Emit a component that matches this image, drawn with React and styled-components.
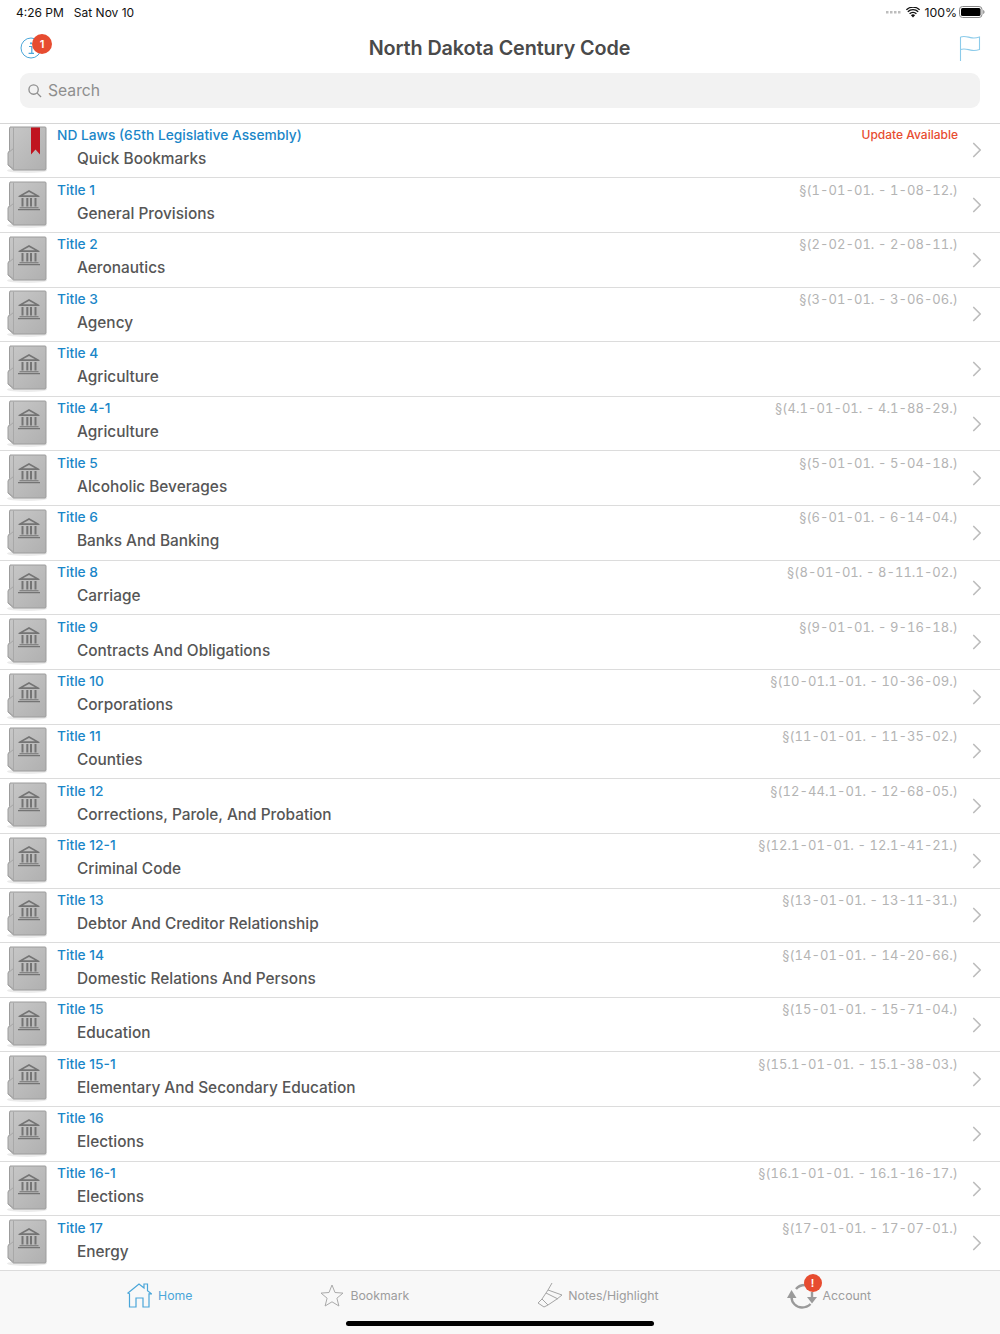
import React from 'react';
import styled, { createGlobalStyle } from 'styled-components';
import { ChevronRight } from 'lucide-react';

const GlobalStyle = createGlobalStyle`
    html, body {
        margin: 0;
        padding: 0;
        background: #fff;
    }
    body {
        font-family: Inter, "Liberation Sans", sans-serif;
    }
`

const Page = styled.div`
    width: 1000px;
    height: 1334px;
    display: flex;
    flex-direction: column;
    overflow: hidden;
    background: #fff;
`

const StatusBar = styled.div`
    height: 24px;
    padding: 0 15px 0 16px;
    display: flex;
    align-items: center;
    justify-content: space-between;
    font-size: 12px;
    color: #111;
`

const StatusGroup = styled.div`
    display: flex;
    align-items: center;
    gap: ${props => props.gap || 10}px;
`

const Percent = styled.span`
    font-size: 12.3px;
    margin-right: -2px;
`

const NavBar = styled.div`
    height: 49px;
    padding: 0 19px 1px 20px;
    box-sizing: border-box;
    display: flex;
    align-items: center;
    justify-content: space-between;
`

const NavIcon = styled.div`
    position: relative;
    width: 22px;
    height: 22px;
    display: flex;
`

const Badge = styled.span`
    position: absolute;
    top: ${props => props.top}px;
    left: ${props => props.left}px;
    width: ${props => props.size}px;
    height: ${props => props.size}px;
    border-radius: 50%;
    background: #e74c30;
    color: #fff;
    font-size: 11px;
    font-weight: 600;
    display: flex;
    align-items: center;
    justify-content: center;
`

const Heading = styled.h1`
    margin: 0 2px 0 0;
    font-size: 19.8px;
    font-weight: 600;
    letter-spacing: -0.1px;
    color: #4a4a4a;
`

const SearchWrap = styled.div`
    padding: 0 20px 14.6px;
`

const SearchBar = styled.div`
    height: 35px;
    border-radius: 9px;
    background: #f2f2f2;
    padding: 0 8px;
    display: flex;
    align-items: center;
    gap: 6px;
    font-size: 15.7px;
    color: #8e8e8e;
`

const List = styled.div`
    flex: 1;
    min-height: 0;
    border-top: 1px solid #d6d6d6;
`

const Row = styled.div`
    height: 54.65px;
    box-sizing: border-box;
    border-bottom: 1px solid #dcdcdc;
    display: flex;
    align-items: center;
    padding-left: 7px;
    padding-right: 10px;
`

const Book = styled.svg`
    flex: none;
    width: 42px;
    height: 48px;
    margin-right: 8px;
`

const RowBody = styled.div`
    flex: 1;
    min-width: 0;
    display: flex;
    flex-direction: column;
    gap: 4px;
    height: 46px;
    margin-bottom: 5px;
`

const TopLine = styled.div`
    display: flex;
    justify-content: space-between;
    align-items: center;
    height: 20px;
    padding-right: 6px;
`

const TitleText = styled.span`
    font-size: 13.75px;
    font-weight: 500;
    color: #1a86c8;
`

const Range = styled.span`
    font-size: 13px;
    letter-spacing: 0.05px;
    font-variant-numeric: tabular-nums;
    color: #b4b4b4;
`

const Update = styled.span`
    font-size: 12px;
    font-weight: 500;
    color: #e74c30;
`

const Name = styled.div`
    padding-left: 20px;
    font-size: 15.4px;
    font-weight: 500;
    color: #565656;
`

const Chevron = styled(ChevronRight)`
    flex: none;
    width: 26px;
    height: 26px;
    color: #bdbdbd;
`

const TabBar = styled.div`
    position: relative;
    flex: none;
    height: 62.75px;
    background: #f8f8f8;
`

const Tabs = styled.div`
    height: 47.6px;
    padding-left: 127px;
    display: flex;
    gap: 128px;
`

const Tab = styled.div`
    display: flex;
    align-items: center;
    gap: 6px;
    font-size: 12.3px;
    color: ${props => props.active ? '#4aa6d9' : '#9d9d9d'};
`

const TabIcon = styled.div`
    position: relative;
    display: flex;
`

const HomeBar = styled.div`
    position: absolute;
    left: 346px;
    bottom: 8px;
    width: 308px;
    height: 5px;
    border-radius: 3px;
    background: #000;
`

const rows = [
    ['Title 1', 'General Provisions', '§(1-01-01. - 1-08-12.)'],
    ['Title 2', 'Aeronautics', '§(2-02-01. - 2-08-11.)'],
    ['Title 3', 'Agency', '§(3-01-01. - 3-06-06.)'],
    ['Title 4', 'Agriculture', ''],
    ['Title 4-1', 'Agriculture', '§(4.1-01-01. - 4.1-88-29.)'],
    ['Title 5', 'Alcoholic Beverages', '§(5-01-01. - 5-04-18.)'],
    ['Title 6', 'Banks And Banking', '§(6-01-01. - 6-14-04.)'],
    ['Title 8', 'Carriage', '§(8-01-01. - 8-11.1-02.)'],
    ['Title 9', 'Contracts And Obligations', '§(9-01-01. - 9-16-18.)'],
    ['Title 10', 'Corporations', '§(10-01.1-01. - 10-36-09.)'],
    ['Title 11', 'Counties', '§(11-01-01. - 11-35-02.)'],
    ['Title 12', 'Corrections, Parole, And Probation', '§(12-44.1-01. - 12-68-05.)'],
    ['Title 12-1', 'Criminal Code', '§(12.1-01-01. - 12.1-41-21.)'],
    ['Title 13', 'Debtor And Creditor Relationship', '§(13-01-01. - 13-11-31.)'],
    ['Title 14', 'Domestic Relations And Persons', '§(14-01-01. - 14-20-66.)'],
    ['Title 15', 'Education', '§(15-01-01. - 15-71-04.)'],
    ['Title 15-1', 'Elementary And Secondary Education', '§(15.1-01-01. - 15.1-38-03.)'],
    ['Title 16', 'Elections', ''],
    ['Title 16-1', 'Elections', '§(16.1-01-01. - 16.1-16-17.)'],
    ['Title 17', 'Energy', '§(17-01-01. - 17-07-01.)'],
]

const BookIcon = ({bookmark, id}) => (
    <Book viewBox="0 0 42 48">
        <defs>
            <linearGradient id={id} x1="0" y1="0" x2="1" y2="1">
                <stop offset="0" stopColor="#c8c8c8" />
                <stop offset="1" stopColor="#b0b0b0" />
            </linearGradient>
        </defs>
        <ellipse cx="20" cy="44.5" rx="20" ry="2.5" fill="#000" opacity="0.08" />
        <path d="M3 1h35a1 1 0 0 1 1 1V43a1 1 0 0 1-1 1H6.500L1 39V27L2.500 24.500V3z" fill={`url(#${id})`} stroke="#9c9c9c" strokeWidth="1" />
        <path d="M6.500 1.500V44" stroke="#a8a8a8" strokeWidth="1" fill="none" />
        <path d="M1.500 26.500l5-4M1.500 39l5 4" stroke="#a6a6a6" strokeWidth="1" fill="none" />
        {bookmark
            ? <path d="M24 1.500h9v27l-4.500-5-4.500 5z" fill="#c0141f" />
            : <g fill="#747474">
                <path d="M22 9l-10.500 6v1h21v-1zM22 11l-6 3.300h12z" fillRule="evenodd" />
                <path d="M14.500 17h2v8.500h-2zM19.300 17h2v8.500h-2zM23 17h2v8.500h-2zM27.500 17h2v8.500h-2z" />
                <path d="M12.500 26.200h19v1h-19zM11 28h22v1.200H11z" />
            </g>}
    </Book>
)

const App = () => (
    <Page>
        <GlobalStyle />
        <StatusBar>
            <StatusGroup gap={10}>
                <span>4:26 PM</span>
                <span>Sat Nov 10</span>
            </StatusGroup>
            <StatusGroup gap={4}>
                <svg width="16" height="4" viewBox="0 0 16 4" fill="#bdbdbd">
                    <rect x="0" y="1" width="2.5" height="2.5" />
                    <rect x="4" y="1" width="2.5" height="2.5" />
                    <rect x="8" y="1" width="2.5" height="2.5" />
                    <rect x="12" y="1" width="2.5" height="2.5" />
                </svg>
                <svg width="14" height="11" viewBox="0 0 14 11">
                    <path d="M7 10.500L4.900 8.200a3 3 0 0 1 4.200 0z" fill="#111" />
                    <path d="M3.600 6.800a4.900 4.900 0 0 1 6.800 0M1.800 4.700a7.500 7.500 0 0 1 10.400 0M.4 2.800a9.600 9.600 0 0 1 13.200 0" stroke="#111" strokeWidth="1.400" fill="none" />
                </svg>
                <Percent>100%</Percent>
                <svg width="26" height="12" viewBox="0 0 26 12">
                    <rect x="0.5" y="0.5" width="22.5" height="11" rx="3" fill="none" stroke="#888" />
                    <rect x="2" y="2" width="19.5" height="8" rx="1.5" fill="#000" />
                    <path d="M24.200 4v4c.8-.2 1.300-1 1.300-2s-.5-1.800-1.300-2z" fill="#888" />
                </svg>
            </StatusGroup>
        </StatusBar>

        <NavBar>
            <NavIcon>
                <svg width="22" height="22" viewBox="0 0 22 22" fill="none">
                    <circle cx="11" cy="11" r="10" stroke="#4aa6d9" strokeWidth="1" />
                    <path d="M9 9.500h2.800V16M8.600 16.300h5.400" stroke="#4aa6d9" strokeWidth="1.200" />
                    <circle cx="11" cy="6.300" r="1.100" fill="#4aa6d9" />
                </svg>
                <Badge top={-3} left={12} size={20}>1</Badge>
            </NavIcon>
            <Heading>North Dakota Century Code</Heading>
            <svg width="22" height="26" viewBox="0 0 22 26" fill="none" stroke="#8ccbea" strokeWidth="1.100">
                <path d="M1.500 26V2" />
                <path d="M1.500 2c4-1.500 7 0 10 .6 3 .6 6 .4 9-.6v12.500c-3 1-6 1.200-9 .6-3-.6-6-2-10-.6" />
            </svg>
        </NavBar>

        <SearchWrap>
            <SearchBar>
                <svg width="14" height="14" viewBox="0 0 15 15" fill="none" stroke="#8e8e8e" strokeWidth="1.400">
                    <circle cx="6" cy="6" r="5" />
                    <path d="M9.800 9.800L14 14" />
                </svg>
                <span>Search</span>
            </SearchBar>
        </SearchWrap>

        <List>
            <Row>
                <BookIcon bookmark id="book-top" />
                <RowBody>
                    <TopLine>
                        <TitleText>ND Laws (65th Legislative Assembly)</TitleText>
                        <Update>Update Available</Update>
                    </TopLine>
                    <Name>Quick Bookmarks</Name>
                </RowBody>
                <Chevron strokeWidth={1.6} />
            </Row>
            {rows.map((row, i) => (
                <Row key={i}>
                    <BookIcon id={`book-${i}`} />
                    <RowBody>
                        <TopLine>
                            <TitleText>{row[0]}</TitleText>
                            <Range>{row[2]}</Range>
                        </TopLine>
                        <Name>{row[1]}</Name>
                    </RowBody>
                    <Chevron strokeWidth={1.6} />
                </Row>
            ))}
        </List>

        <TabBar>
            <Tabs>
                <Tab active>
                    <TabIcon>
                        <svg width="25" height="26" viewBox="0 0 25 26" fill="none" stroke="#4aa6d9" strokeWidth="1.200">
                            <path d="M1 11L12 2l5 4V2h3.500v6.800l4 3h-2.500V25H16V16H9v9H2.500V11.800z" />
                        </svg>
                    </TabIcon>
                    <span>Home</span>
                </Tab>
                <Tab>
                    <TabIcon>
                        <svg width="24" height="23" viewBox="0 0 24 23" fill="none" stroke="#aaa" strokeWidth="1">
                            <path d="M12 1l3 7.500 8 .6-6.100 5.100 2 7.800L12 17.800 5.100 22l2-7.800L1 9.100l8-.6z" />
                        </svg>
                    </TabIcon>
                    <span>Bookmark</span>
                </Tab>
                <Tab>
                    <TabIcon>
                        <svg width="25" height="26" viewBox="0 0 25 26" fill="none" stroke="#a5a5a5" strokeWidth="1">
                            <path d="M15 1l-4 7 14 5-5 4-9 6-6-6 6-9" />
                            <path d="M5 17l-4 4 6 4 4-2M9 11l12 6" />
                        </svg>
                    </TabIcon>
                    <span>Notes/Highlight</span>
                </Tab>
                <Tab>
                    <TabIcon>
                        <svg width="30" height="27" viewBox="0 0 30 27" fill="none" stroke="#9a9a9a" strokeWidth="2.400">
                            <path d="M4.500 15c0 6 5 10.500 10.500 10.500 3 0 6-1 8.500-3.500" />
                            <path d="M9 7c2-2.500 5-4 9-4" />
                            <path d="M25 10v8" />
                            <path d="M0 16L4.500 8 9.500 16z" fill="#9a9a9a" stroke="none" />
                            <path d="M20 15h10l-5 6.500z" fill="#9a9a9a" stroke="none" />
                        </svg>
                        <Badge top={-8} left={17} size={18}>!</Badge>
                    </TabIcon>
                    <span>Account</span>
                </Tab>
            </Tabs>
            <HomeBar />
        </TabBar>
    </Page>
)

export default App;
